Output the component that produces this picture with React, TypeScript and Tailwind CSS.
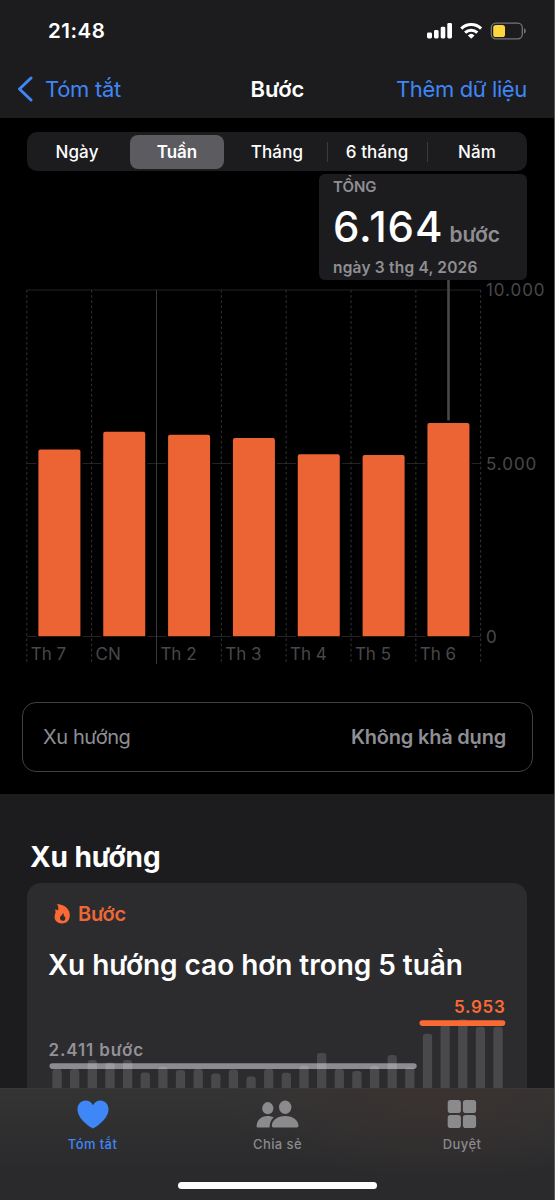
import React from "react";

const days = [
  { label: "Th 7", top: 449.5 },
  { label: "CN", top: 431.8 },
  { label: "Th 2", top: 434.8 },
  { label: "Th 3", top: 438 },
  { label: "Th 4", top: 454.2 },
  { label: "Th 5", top: 455 },
  { label: "Th 6", top: 423 },
];

const weeks = [
  1069, 1069, 1060, 1062.5, 1060, 1072.5, 1066.8, 1070, 1069, 1073.5, 1069.5, 1076.5, 1069,
  1072.8, 1066, 1053, 1069, 1071, 1066, 1055, 1067.5, 1033.8, 1025, 1019.3, 1026.7, 1026.7,
];

const segments = ["Ngày", "Tuần", "Tháng", "6 tháng", "Năm"];

function StatusIcons() {
  return (
    <svg width="100" height="20" viewBox="426 20.5 100 20" className="block">
      <g fill="#fff">
        <rect x="427" y="32" width="5" height="6" rx="1.4" />
        <rect x="434" y="29.6" width="4.6" height="8.4" rx="1.4" />
        <rect x="440.7" y="26.2" width="4.6" height="11.8" rx="1.4" />
        <rect x="447.3" y="22.6" width="4.7" height="15.4" rx="1.4" />
      </g>
      <g fill="none" stroke="#fff" strokeWidth="3">
        <path d="M461.3 28.1a14.2 14.2 0 0 1 19.8 0" />
        <path d="M465.1 32.2a8.8 8.8 0 0 1 12.2 0" />
      </g>
      <path d="M467.9 34.9a4.8 4.8 0 0 1 6.6 0l-3.3 3.3z" fill="#fff" />
      <rect x="491.3" y="22.7" width="31" height="15.6" rx="4.5" fill="none" stroke="#747477" strokeWidth="1.3" />
      <rect x="493.2" y="24.5" width="11.8" height="12" rx="2.6" fill="#fdd63c" />
      <path d="M524 27.8c2.4.8 2.4 4.4 0 5.2z" fill="#747477" />
    </svg>
  );
}

function StepsChart() {
  const x0 = 27;
  const step = 64.84;
  return (
    <svg width="555" height="385" viewBox="0 280 555 385" className="block font-['Inter',sans-serif]">
      {[290, 463.5, 636.5].map((y) => (
        <line key={y} x1="27" x2="481" y1={y} y2={y} stroke="#232325" />
      ))}
      {[0, 1, 2, 3, 4, 5, 6, 7].map((i) => (
        <line
          key={i}
          x1={x0 + i * step - 0.2}
          x2={x0 + i * step - 0.2}
          y1="290"
          y2={i === 2 ? 664 : 662}
          stroke={i === 2 ? "#3a3a3d" : "#343436"}
          strokeDasharray={i === 2 ? undefined : "2.6 2.6"}
        />
      ))}
      {days.map((d, i) => (
        <g key={d.label}>
          <rect x={36.5 + i * step} y="460" width="46" height="177" fill="#000" />
          <path
            d={`M${38.4 + i * step} 636.3V${d.top + 2}q0 -2 2 -2h38q2 0 2 2V636.3z`}
            fill="#ec6433"
          />
          <text x={30.7 + i * step} y="660.3" fontSize="17" fill="#48484b">
            {d.label}
          </text>
        </g>
      ))}
      <line x1="448.5" x2="448.5" y1="280" y2="420.5" stroke="#48484a" strokeWidth="2.6" />
      <g fontSize="17" letterSpacing="0.95" fill="#48484b">
        <text x="486" y="296.3">10.000</text>
        <text x="486" y="469.8">5.000</text>
        <text x="486" y="642.8">0</text>
      </g>
    </svg>
  );
}

function TrendChart() {
  return (
    <svg width="500" height="110" viewBox="27 978 500 110" className="block font-['Inter',sans-serif]">
      <rect x="49.5" y="1063.3" width="367.2" height="5.6" rx="2.8" fill="#8c8b90" />
      {weeks.map((top, i) => (
        <path
          key={i}
          d={`M${52.4 + i * 17.64} 1088V${top + 3}q0 -3 3 -3h3.3q3 0 3 3V1088z`}
          fill="#fff"
          fillOpacity="0.14"
        />
      ))}
      <rect x="419.5" y="1020.3" width="85.8" height="5.6" rx="2.8" fill="#fb6a35" />
      <text x="48.5" y="1056" fontSize="17" fontWeight="600" letterSpacing="0.9" fill="#929197">
        2.411 bước
      </text>
      <text x="454" y="1012.5" fontSize="17" fontWeight="600" letterSpacing="0.7" fill="#fb6a35">
        5.953
      </text>
    </svg>
  );
}

export default function App() {
  return (
    <div className="relative flex h-[1200px] w-[555px] flex-col overflow-hidden bg-[#1c1c1e] font-['Inter','Noto_Sans',sans-serif] text-white">
      <header className="h-[118px] shrink-0 bg-[#1c1c1e]">
        <div className="flex h-[60px] items-center justify-between pl-12 pr-[29px] pt-[2px]">
          <span className="text-[20.5px] font-semibold tracking-[0.5px]">21:48</span>
          <StatusIcons />
        </div>
        <div className="grid h-[58px] grid-cols-3 items-center pl-[17px] pr-[28px] text-[22px]">
          <div className="flex items-center gap-[11px] text-[#3f86f7]">
            <svg width="17" height="27" viewBox="0 0 17 27" className="block">
              <path d="M14 2L2.500 13l11.500 11" fill="none" stroke="currentColor" strokeWidth="3" strokeLinecap="round" strokeLinejoin="round" />
            </svg>
            <span className="whitespace-nowrap tracking-[-0.3px]">Tóm tắt</span>
          </div>
          <span className="pl-[11px] text-center font-semibold">Bước</span>
          <span className="justify-self-end whitespace-nowrap tracking-[-0.35px] text-[#3f86f7]">Thêm dữ liệu</span>
        </div>
      </header>

      <section className="h-[676px] shrink-0 bg-black pt-[14px]">
        <div className="ml-[27px] flex h-[39px] w-[500px] rounded-[10px] bg-[#1c1c1e] text-[17px] font-medium">
          {segments.map((s, i) => (
            <div key={s} className="relative flex flex-1 items-center justify-center">
              {i === 1 ? (
                <span className="flex h-[34px] w-[94px] items-center justify-center rounded-[8px] bg-[#5b5b60] pt-[2px] font-semibold">{s}</span>
              ) : (
                <span className="whitespace-nowrap pt-[2px] tracking-[0.15px]">{s}</span>
              )}
              {i > 2 && <span className="absolute left-0 top-[10px] h-5 w-px bg-[#3b3b3f]" />}
            </div>
          ))}
        </div>

        <div className="ml-[319px] mt-[3px] flex h-[106px] w-[208px] flex-col rounded-[6px] bg-[#1c1c1e] pl-[14px] font-medium text-[#8f8e94]">
          <span className="mt-[4px] text-[15px] font-semibold leading-[18px]">TỔNG</span>
          <div className="mt-[6px] flex h-[50px] items-baseline gap-[6px] leading-[50px]">
            <span className="text-[42px] tracking-[1px] text-white">6.164</span>
            <span className="text-[21px] font-semibold tracking-[-0.1px]">bước</span>
          </div>
          <span className="mt-[6px] text-[15.5px] font-semibold leading-5 tracking-[0.2px]">ngày 3 thg 4, 2026</span>
        </div>

        <StepsChart />

        <div className="ml-[22px] mt-[37px] flex h-[70px] w-[511px] items-center justify-between rounded-[14px] border border-[#414143] px-[20px] text-[20px] text-[#8f8e94]">
          <span className="tracking-[-0.4px]">Xu hướng</span>
          <span className="pr-[6px] font-semibold tracking-[-0.2px]">Không khả dụng</span>
        </div>
      </section>

      <section className="h-[294px] shrink-0 overflow-hidden bg-[#1c1c1e] pt-[46px]">
        <h2 className="ml-[30px] text-[28px] font-bold leading-[34px] tracking-[-0.1px]">Xu hướng</h2>
        <div className="ml-[27px] mt-[9px] h-[205px] w-[500px] rounded-t-[14px] bg-[#2c2c2e]">
          <div className="flex h-[62px] items-center pl-[27px]">
            <svg width="17" height="20" viewBox="0 0 17 20" className="block">
              <path
                fillRule="evenodd"
                d="M2.8.3C8 .2 13 2.4 15.1 7.6c1.7 4.5.5 11.9-6.9 11.9C3.4 19.5.4 16.5.6 12.8c.1-2.3 1-3.5 1-4.8 0-1-.4-1.7-.7-2.4 1.500-.1 2.500.3 3.200 1C4.600 4.200 4.500 2 2.800.3zM8.900 8.800c.3 2-2.900 3-2.900 5.300 0 1.800 1.200 2.700 2.700 2.700s2.700-1 2.700-2.600c0-1-.4-1.900-.8-2.300-.1.600-.4 1-.8 1.200.2-1.700-.1-3.400-.9-4.300z"
                fill="#fb6a35"
              />
            </svg>
            <span className="ml-[7px] text-[20px] font-semibold tracking-[-0.3px] text-[#ee6837]">Bước</span>
          </div>
          <div className="flex h-[33px] items-center pl-[21px] pt-[6px] text-[28px] font-semibold">
            <span className="whitespace-nowrap tracking-[-0.04px]">Xu hướng cao hơn trong 5 tuần</span>
          </div>
          <TrendChart />
        </div>
      </section>

      <nav className="flex h-[112px] shrink-0 flex-col items-center border-t border-[#3a3939] bg-[radial-gradient(ellipse_220px_90px_at_440px_0px,#3a3230_0%,#3a323000_100%),linear-gradient(to_bottom,#343435,#2a2a2c_75%)] text-[13px] font-medium tracking-[0.4px] text-[#8b8a8c]">
        <div className="grid h-[93px] w-full grid-cols-3">
          <div className="flex flex-col items-center pt-[11px] text-[#3f86f7]">
            <svg width="32" height="29" viewBox="0 0 32 29" className="block">
              <path d="M16 28.5C15.3 28.5.5 20 .5 9.3.5 4.2 4 .6 8.5.6c3.5 0 6 1.8 7.5 4.7C17.5 2.4 20 .6 23.5.6c4.5 0 8 3.6 8 8.7C31.5 20 16.7 28.5 16 28.5z" fill="currentColor" />
            </svg>
            <span className="mt-[5px] leading-5">Tóm tắt</span>
          </div>
          <div className="flex flex-col items-center pt-[11px]">
            <svg width="43" height="29" viewBox="0 0 43 29" className="block" fill="currentColor">
              <ellipse cx="11.8" cy="8.2" rx="5.6" ry="6.1" />
              <path d="M.6 26.5C.6 20.3 5 15.9 11.5 15.9c2.5 0 4.5.5 6.2 1.5-2.7 2.2-4.2 5.5-4.1 10.2H1.7q-1.1 0-1.1-1.1z" />
              <ellipse cx="29.2" cy="7.2" rx="6.2" ry="6.8" />
              <path d="M15.8 25.8C15.8 20.6 21 16 29.2 16S42.5 20.6 42.5 25.8q0 1.8-1.6 1.8H17.4q-1.6 0-1.6-1.8z" />
            </svg>
            <span className="mt-[5px] leading-5">Chia sẻ</span>
          </div>
          <div className="flex flex-col items-center pr-[1px] pt-[11px]">
            <svg width="30" height="29" viewBox="0 0 30 29" className="block" fill="currentColor">
              <rect x=".7" y="0" width="13.2" height="13" rx="2.8" />
              <rect x="15.9" y="0" width="13.2" height="13" rx="2.8" />
              <rect x=".7" y="15" width="13.2" height="13" rx="2.8" />
              <rect x="15.9" y="15" width="13.2" height="13" rx="2.8" />
            </svg>
            <span className="mt-[5px] leading-5">Duyệt</span>
          </div>
        </div>
        <div className="h-[7px] w-[199px] rounded-full bg-white" />
      </nav>

      <div className="absolute right-0 top-0 h-full w-px bg-[#58585a]" />
    </div>
  );
}
